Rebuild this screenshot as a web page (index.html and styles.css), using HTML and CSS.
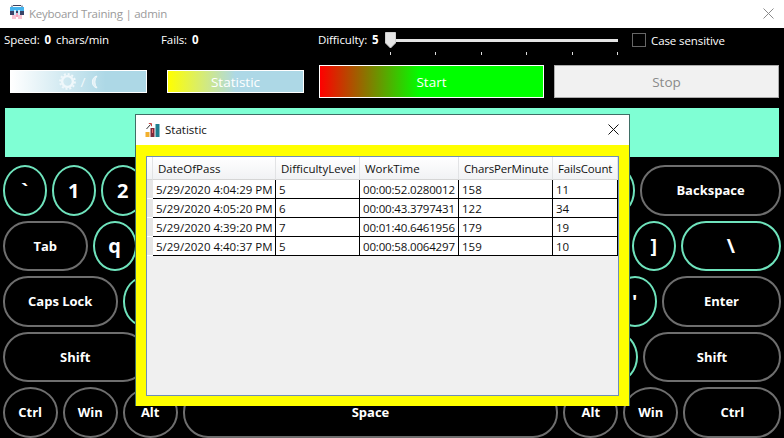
FILE: index.html
```html
<!DOCTYPE html>
<html lang="en">
<head>
  <meta charset="UTF-8">
  <title>Keyboard Training | admin</title>
  <link rel="stylesheet" href="styles.css">
</head>
<body>

  <header class="titlebar">
    <svg class="app-icon" width="16" height="16" viewBox="0 0 16 16">
      <path d="M4 1.5H12" stroke="#3b3f5c" fill="none"/>
      <path d="M3 1.5V3M13 1.5V3" stroke="#3b3f5c" fill="none"/>
      <rect x="1" y="3" width="14" height="4" fill="#45b4ee"/>
      <rect x="1" y="7" width="14" height="4" fill="#3a4468"/>
      <rect x="5" y="6" width="2" height="5" fill="#cfeefc"/>
      <rect x="9" y="6" width="2" height="5" fill="#cfeefc"/>
      <rect x="3" y="11" width="4" height="4" fill="#f9c3d2"/>
      <rect x="9" y="11" width="4" height="4" fill="#f9c3d2"/>
      <rect x="7" y="9" width="2" height="4" fill="#f4a6bc"/>
    </svg>
    <span class="app-title">Keyboard Training | admin</span>
    <svg class="close-icon" width="11" height="11" viewBox="0 0 11 11">
      <path d="M0.5 0.5L10.5 10.5M10.5 0.5L0.5 10.5" stroke="#8a8a8a" fill="none"/>
    </svg>
  </header>

  <section class="stats">
    <div class="stat stat-speed">Speed: <b>0</b> chars/min</div>
    <div class="stat stat-fails">Fails: <b>0</b></div>
    <div class="stat stat-difficulty">Difficulty: <b>5</b></div>
    <div class="slider">
      <div class="slider-track"></div>
      <svg class="slider-thumb" width="11" height="17" viewBox="0 0 11 17">
        <path d="M0.5 0.5H10.5V11L5.5 16L0.5 11Z" fill="#e6e6e6" stroke="#cfcfcf"/>
      </svg>
      <div class="ticks">
        <i></i><i></i><i></i><i></i><i></i><i></i>
      </div>
    </div>
    <label class="case-check"><span class="box"></span>Case sensitive</label>
  </section>

  <section class="actions">
    <button class="btn btn-small btn-theme">
      <svg width="17" height="17" viewBox="0 0 17 17">
        <circle cx="8.5" cy="8.5" r="5.4" fill="none" stroke="#f0f8fb" stroke-width="2.4"/>
        <circle cx="8.5" cy="8.5" r="7.4" fill="none" stroke="#f0f8fb" stroke-width="2" stroke-dasharray="2 1.87"/>
      </svg>
      <span>/</span>
      <svg width="8" height="14" viewBox="0 0 8 14">
        <path d="M7 1A6.2 6.2 0 0 0 7 13A9.5 9.5 0 0 1 7 1Z" fill="#e2f1f6" stroke="#f0f8fb"/>
      </svg>
    </button>
    <button class="btn btn-small btn-statistic">Statistic</button>
    <button class="btn btn-big btn-start">Start</button>
    <button class="btn btn-big btn-stop">Stop</button>
  </section>

  <div class="text-panel"></div>

  <main class="keyboard">
    <div class="row">
      <div class="key char">`</div><div class="key char">1</div><div class="key char">2</div><div class="key char">3</div>
      <div class="key char">4</div><div class="key char">5</div><div class="key char">6</div><div class="key char">7</div>
      <div class="key char">8</div><div class="key char">9</div><div class="key char">0</div><div class="key char">-</div>
      <div class="key char">=</div><div class="key wide">Backspace</div>
    </div>
    <div class="row">
      <div class="key wide w-tab">Tab</div>
      <div class="key char">q</div><div class="key char">w</div><div class="key char">e</div><div class="key char">r</div>
      <div class="key char">t</div><div class="key char">y</div><div class="key char">u</div><div class="key char">i</div>
      <div class="key char">o</div><div class="key char">p</div><div class="key char">[</div><div class="key char">]</div>
      <div class="key char wide">\</div>
    </div>
    <div class="row">
      <div class="key wide w-caps">Caps Lock</div>
      <div class="key char">a</div><div class="key char">s</div><div class="key char">d</div><div class="key char">f</div>
      <div class="key char">g</div><div class="key char">h</div><div class="key char">j</div><div class="key char">k</div>
      <div class="key char">l</div><div class="key char">;</div><div class="key char">'</div>
      <div class="key wide">Enter</div>
    </div>
    <div class="row">
      <div class="key wide w-shift">Shift</div>
      <div class="key char">z</div><div class="key char">x</div><div class="key char">c</div><div class="key char">v</div>
      <div class="key char">b</div><div class="key char">n</div><div class="key char">m</div><div class="key char">,</div>
      <div class="key char">.</div><div class="key char">/</div>
      <div class="key wide">Shift</div>
    </div>
    <div class="row">
      <div class="key mod">Ctrl</div><div class="key mod">Win</div><div class="key mod">Alt</div>
      <div class="key wide">Space</div>
      <div class="key mod">Alt</div><div class="key mod">Win</div>
      <div class="key wide w-ctrl">Ctrl</div>
    </div>
  </main>

  <!-- Statistic window, sits over the keyboard -->
  <div class="dialog">
    <div class="dialog-title">
      <svg width="16" height="16" viewBox="0 0 16 16">
        <rect x="0.5" y="10" width="4" height="5" fill="#f2b02e"/>
        <rect x="5.5" y="6" width="4" height="9" fill="#7c2a3a"/>
        <rect x="7" y="7" width="1" height="4" fill="#ef6f6f"/>
        <rect x="10.5" y="2" width="4" height="13" fill="#1d7f8f"/>
        <path d="M1.5 7L5.5 2.5" fill="none" stroke="#333"/>
        <path d="M3.8 1.5H6.5V4.2" fill="none" stroke="#c8423f"/>
      </svg>
      <span>Statistic</span>
      <svg class="dialog-close" width="11" height="11" viewBox="0 0 11 11">
        <path d="M0.5 0.5L10.5 10.5M10.5 0.5L0.5 10.5" stroke="#111" fill="none"/>
      </svg>
    </div>
    <div class="dialog-body">
      <div class="grid">
        <table>
          <colgroup>
            <col class="c0"><col class="c1"><col class="c2"><col class="c3"><col class="c4"><col class="c5">
          </colgroup>
          <thead>
            <tr><th></th><th>DateOfPass</th><th>DifficultyLevel</th><th>WorkTime</th><th class="tight">CharsPerMinute</th><th class="tight">FailsCount</th></tr>
          </thead>
          <tbody>
            <tr><th></th><td>5/29/2020 4:04:29 PM</td><td>5</td><td class="tight">00:00:52.0280012</td><td>158</td><td>11</td></tr>
            <tr><th></th><td>5/29/2020 4:05:20 PM</td><td>6</td><td class="tight">00:00:43.3797431</td><td>122</td><td>34</td></tr>
            <tr><th></th><td>5/29/2020 4:39:20 PM</td><td>7</td><td class="tight">00:01:40.6461956</td><td>179</td><td>19</td></tr>
            <tr><th></th><td>5/29/2020 4:40:37 PM</td><td>5</td><td class="tight">00:00:58.0064297</td><td>159</td><td>10</td></tr>
          </tbody>
        </table>
      </div>
    </div>
  </div>

</body>
</html>
```

FILE: styles.css
```css
* {
  box-sizing: border-box;
}
html, body {
  height: 438px;
  overflow: hidden;
}
body {
  margin: 0;
  position: relative;
  background: #000;
  color: #fff;
  font-family: "Open Sans", "Noto Sans", sans-serif;
  font-size: 11.5px;
}
.titlebar {
  display: flex;
  align-items: center;
  height: 28px;
  padding: 0 10px 2px 9px;
  background: #fff;
}
.app-icon {
  margin-top: -2px;
}
.app-title {
  margin-left: 4px;
  color: #9a9a9a;
  letter-spacing: -0.25px;
}
.close-icon {
  margin-left: auto;
}

/* top line */
.stats {
  display: flex;
  height: 37px;
  padding-left: 4px;
  letter-spacing: -0.1px;
}
.stat {
  line-height: 24px;
  white-space: nowrap;
}
.stat b {
  margin: 0 2px;
}
.stat-speed {
  width: 157px;
}
.stat-fails {
  width: 157px;
}
.stat-difficulty {
  width: 63px;
}
.slider {
  position: relative;
  width: 237px;
}
.slider-track {
  height: 3px;
  margin: 11px 0 0 4px;
  background: #e4e4e4;
}
.slider-thumb {
  position: absolute;
  left: 4px;
  top: 4px;
}
.ticks {
  display: flex;
  justify-content: space-between;
  margin: 10px 0 0 9px;
}
.ticks i {
  width: 1px;
  height: 3px;
  background: #ddd;
}
.case-check {
  display: flex;
  align-items: center;
  height: 24px;
  margin-left: 14px;
}
.box {
  width: 14px;
  height: 14px;
  margin-right: 5px;
  border: 1px solid #666;
}

/* buttons */
.actions {
  display: flex;
  align-items: center;
  height: 33px;
  padding-left: 10px;
}
.btn {
  display: flex;
  align-items: center;
  justify-content: center;
  border: 1px solid #fff;
  padding: 0;
  color: #fff;
  font-family: inherit;
  font-size: 13.5px;
}
.btn-small {
  width: 137px;
  height: 23px;
  margin-right: 20px;
}
.btn-small + .btn-small {
  margin-right: 15px;
}
.btn-big {
  width: 225px;
  height: 33px;
}
.btn-theme {
  gap: 5px;
  background: linear-gradient(90deg, #fff, #add8e6 70%);
  color: #f0f8fb;
}
.btn-statistic {
  background: linear-gradient(90deg, #ff0, #add8e6 50%);
}
.btn-start {
  margin-right: 10px;
  background: linear-gradient(90deg, #f00, #0f0 45%);
}
.btn-stop {
  border: 1px solid #adadad;
  background: #f1f1f1;
  color: #8a8a8a;
}
.text-panel {
  height: 49px;
  margin: 10px 5px 0;
  background: #7fffd4;
}

/* keyboard */
.keyboard {
  display: flex;
  flex-direction: column;
  gap: 5px;
  margin-top: 8px;
  padding: 0 2.7px;
}
.row {
  display: flex;
  gap: 5px;
  height: 50.5px;
}
.key {
  display: flex;
  align-items: center;
  justify-content: center;
  width: 44px;
  border: 2px solid #6e6e6e;
  border-radius: 50%;
  font-size: 13px;
  font-weight: 700;
}
.char {
  border-color: #6fe3bc;
  font-size: 20px;
}
.mod {
  width: 55px;
}
.wide {
  flex: 1;
  border-radius: 25px;
}
.w-tab {
  flex: none;
  width: 85px;
}
.w-caps {
  flex: none;
  width: 115px;
}
.w-shift {
  flex: none;
  width: 145px;
}
.w-ctrl {
  flex: none;
  width: 98px;
}

/* statistic window */
.dialog {
  position: absolute;
  left: 135px;
  top: 114px;
  width: 495px;
  height: 292px;
  display: flex;
  flex-direction: column;
  border: 1px solid #3f6f66;
  border-bottom: 0;
  background: #ff0;
  color: #111;
}
.dialog-title {
  display: flex;
  align-items: center;
  height: 30px;
  padding: 0 10px 1px 9px;
  background: #fff;
}
.dialog-title span {
  margin-left: 4px;
}
.dialog-close {
  margin-left: auto;
}
.dialog-body {
  flex: 1;
  padding: 11px 10px 10px;
}
.grid {
  height: 100%;
  border: 1px solid #6f8fb5;
  background: #f0f0f0;
}
table {
  border-collapse: separate;
  border-spacing: 0;
  table-layout: fixed;
  width: 471px;
}
.c0 { width: 6px; }
.c1 { width: 123px; }
.c2 { width: 84px; }
.c3 { width: 99px; }
.c4 { width: 94px; }
.c5 { width: 65px; }
thead th {
  height: 23px;
  padding: 0 0 0 5px;
  border-right: 1px solid #e2e3e5;
  border-bottom: 1px solid #d5d5d5;
  background: linear-gradient(#fff, #f1f2f4);
  font-weight: 400;
  text-align: left;
  white-space: nowrap;
  overflow: hidden;
}
thead th:first-child {
  padding: 0;
}
tbody th {
  height: 19px;
  padding: 0;
  border-bottom: 1px solid #fff;
  background: #e6e6e6;
}
td {
  height: 19px;
  padding: 0 0 0 3px;
  border-right: 1px solid #000;
  border-bottom: 1px solid #000;
  background: #fff;
  white-space: nowrap;
  overflow: hidden;
}
.tight {
  letter-spacing: -0.17px;
}
```
